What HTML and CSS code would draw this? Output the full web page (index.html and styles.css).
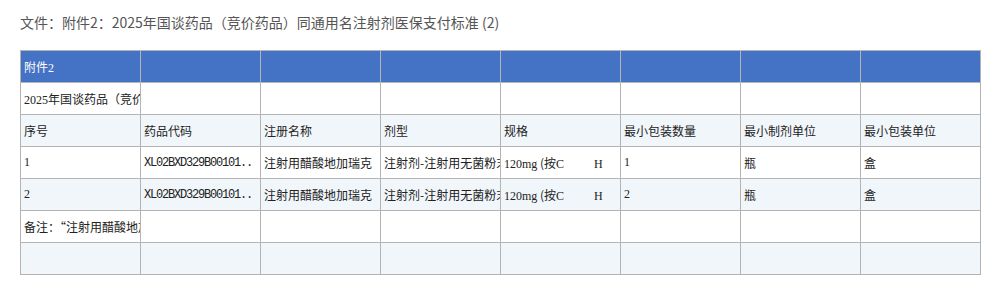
FILE: index.html
```html
<!DOCTYPE html>
<html lang="zh-CN">
<head>
<meta charset="utf-8">
<title>附件2</title>
<link rel="stylesheet" href="styles.css">
</head>
<body>
<div class="page">
  <div class="title">文件：附件2：2025年国谈药品（竞价药品）同通用名注射剂医保支付标准 (2)</div>
  <table class="sheet">
    <tr class="head">
      <td>附件<span class="num">2</span></td><td></td><td></td><td></td><td></td><td></td><td></td><td></td>
    </tr>
    <tr>
      <td><span class="num">2025</span>年国谈药品（竞价药品）同通用名注射剂医保支付标准</td><td></td><td></td><td></td><td></td><td></td><td></td><td></td>
    </tr>
    <tr class="alt">
      <td>序号</td><td>药品代码</td><td>注册名称</td><td>剂型</td><td>规格</td><td>最小包装数量</td><td>最小制剂单位</td><td>最小包装单位</td>
    </tr>
    <tr>
      <td class="num">1</td><td class="code">XL02BXD329B00101..</td><td>注射用醋酸地加瑞克</td><td>注射剂-注射用无菌粉末</td><td><span class="num">120mg</span> (按<span class="num">C</span><span class="gap"></span><span class="num">H</span></td><td class="num">1</td><td>瓶</td><td>盒</td>
    </tr>
    <tr class="alt">
      <td class="num">2</td><td class="code">XL02BXD329B00101..</td><td>注射用醋酸地加瑞克</td><td>注射剂-注射用无菌粉末</td><td><span class="num">120mg</span> (按<span class="num">C</span><span class="gap"></span><span class="num">H</span></td><td class="num">2</td><td>瓶</td><td>盒</td>
    </tr>
    <tr>
      <td>备注：“注射用醋酸地加瑞克”医保支付标准</td><td></td><td></td><td></td><td></td><td></td><td></td><td></td>
    </tr>
    <tr class="alt">
      <td></td><td></td><td></td><td></td><td></td><td></td><td></td><td></td>
    </tr>
  </table>
</div>
</body>
</html>
```
FILE: styles.css
```css
html, body {
  margin: 0;
  padding: 0;
  background: #ffffff;
}
.page {
  padding: 12px 20px 0 20px;
  font-family: "Noto Sans CJK SC", "Noto Sans", sans-serif;
}
.title {
  font-size: 14px;
  line-height: 20px;
  height: 20px;
  color: #555555;
  margin-bottom: 18px;
  white-space: nowrap;
}
.sheet {
  border-collapse: collapse;
  table-layout: fixed;
  width: 961px;
}
.sheet tr {
  height: 32px;
}
.sheet td {
  width: 120px;
  height: 32px;
  padding: 0 3px;
  border: 1px solid #b4b4b4;
  font-size: 12px;
  color: #222222;
  white-space: nowrap;
  overflow: hidden;
  vertical-align: middle;
  box-sizing: border-box;
}
.sheet tr.head td {
  background: #4472c4;
  color: #ffffff;
}
.sheet tr.alt td {
  background: #f1f6fb;
}
.num {
  font-family: "Liberation Serif", serif;
  font-size: 12px;
}
.code {
  font-family: "Liberation Mono", monospace;
  letter-spacing: -1.2px;
}
.gap {
  display: inline-block;
  width: 30px;
}
```
